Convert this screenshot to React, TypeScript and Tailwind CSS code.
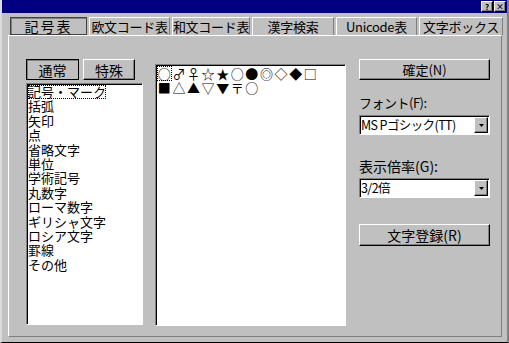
const raised =
  'border border-t-white border-l-white border-r-black border-b-black shadow-[inset_-1px_-1px_0_#808080]';
const sunken =
  'border border-t-[#808080] border-l-[#808080] border-r-white border-b-white shadow-[inset_1px_1px_0_#000]';

const tabs = [
  { label: '記号表', w: 'w-[77px]', active: true },
  { label: '欧文コード表', w: 'w-[81px]' },
  { label: '和文コード表', w: 'w-[78px]' },
  { label: '漢字検索', w: 'w-[82px]' },
  { label: 'Unicode表', w: 'w-[81px]' },
  { label: '文字ボックス', w: 'w-[84px]' }
];

const categories = [
  '記号・マーク',
  '括弧',
  '矢印',
  '点',
  '省略文字',
  '単位',
  '学術記号',
  '丸数字',
  'ローマ数字',
  'ギリシャ文字',
  'ロシア文字',
  '罫線',
  'その他'
];

const symbols = [
  ['○', '♂', '♀', '☆', '★', '○', '●', '◎', '◇', '◆', '□'],
  ['■', '△', '▲', '▽', '▼', '〒', '○']
];

function DropArrow() {
  return (
    <div className={`w-[14px] h-[16px] shrink-0 bg-[#c0c0c0] flex items-center justify-center ${raised}`}>
      <svg width="5" height="3" viewBox="0 0 5 3">
        <path d="M0 0h5L2.5 3z" fill="#000" />
      </svg>
    </div>
  );
}

function Select({ value }: { value: string }) {
  return (
    <div className={`h-[20px] bg-white flex items-center justify-between pl-[1px] pr-[1px] ${sunken}`}>
      <span className="text-[12.5px] leading-[16px] whitespace-nowrap tracking-[-0.6px]">{value}</span>
      <DropArrow />
    </div>
  );
}

export default function App() {
  return (
    <div
      className="w-[509px] h-[343px] bg-[#c0c0c0] border-l-2 border-r-2 border-l-[#dcdcdc] border-r-[#808080] border-b border-b-black overflow-hidden text-black"
      style={{ fontFamily: '"Noto Sans CJK JP", "Liberation Sans", sans-serif' }}>
      <div className="h-[13px] bg-[#000080] flex items-center justify-end pr-[1px] gap-[1px]">
        <div className={`w-[12px] h-[11px] bg-[#c0c0c0] flex items-center justify-center text-[8px] font-bold leading-none ${raised}`}>
          ?
        </div>
        <div className={`w-[12px] h-[11px] bg-[#c0c0c0] flex items-center justify-center text-[8px] font-bold leading-none ${raised}`}>
          ×
        </div>
      </div>

      <div className="pl-[6px] pt-[4px]">
        <div className="flex gap-[2px] pl-[2px] h-[18px]">
          {tabs.map((t) =>
          <div
            key={t.label}
            className={`${t.w} h-[18px] flex items-center justify-center leading-none whitespace-nowrap ${
            t.active ?
            'border border-[#404040] shadow-[inset_1px_1px_0_#808080] text-[14px] tracking-[2px]' :
            'border border-t-white border-l-white border-r-[#808080] border-b-0 text-[13px] tracking-[-0.3px]'}`
            }>
              {t.label}
            </div>
          )}
        </div>

        <div className="w-[494px] h-[302px] border border-t-white border-l-white border-r-[#808080] border-b-[#808080] flex pl-[17px] pt-[23px]">
          <div className="w-[117px] flex flex-col">
            <div className="flex gap-[4px] h-[21px]">
              <div className="w-[53px] border border-black flex items-center justify-center text-[14px] leading-none shadow-[inset_1px_1px_0_#808080]">
                通常
              </div>
              <div className={`w-[52px] flex items-center justify-center text-[14px] leading-none ${raised}`}>
                特殊
              </div>
            </div>
            <div className={`mt-[3px] h-[242px] bg-white pl-[1px] pt-[1px] ${sunken}`}>
              {categories.map((c, i) =>
              <div
                key={c}
                className={`h-[14.4px] text-[13px] leading-[14.4px] whitespace-nowrap w-fit ${
                i === 0 ? 'outline-1 outline-dotted outline-black -outline-offset-1' : ''}`
                }>
                  {c}
                </div>
              )}
            </div>
          </div>

          <div className={`ml-[12px] mt-[5px] w-[191px] h-[262px] bg-white pl-[1px] pt-[1px] ${sunken}`}>
            {symbols.map((row, r) =>
            <div key={r} className="flex h-[14.5px]">
                {row.map((s, i) =>
              <div
                key={i}
                className={`w-[14.6px] h-[14.5px] flex items-center justify-center text-[13px] leading-none ${
                r === 0 && i === 0 ? 'border border-dotted border-black' : ''}`
                }>
                    {s}
                  </div>
              )}
              </div>
            )}
          </div>

          <div className="ml-[13px] w-[131px] flex flex-col">
            <div className={`h-[21px] flex items-center justify-center text-[13px] leading-none ${raised}`}>
              確定(N)
            </div>
            <div className="mt-[16px] text-[13px] leading-none tracking-[-0.5px]">フォント(F):</div>
            <div className="mt-[6px]">
              <Select value="MS Pゴシック(TT)" />
            </div>
            <div className="mt-[24px] text-[14px] leading-none">表示倍率(G):</div>
            <div className="mt-[5px]">
              <Select value="3/2倍" />
            </div>
            <div className={`mt-[26px] h-[22px] flex items-center justify-center text-[14px] leading-none ${raised}`}>
              文字登録(R)
            </div>
          </div>
        </div>
      </div>
    </div>);

}
